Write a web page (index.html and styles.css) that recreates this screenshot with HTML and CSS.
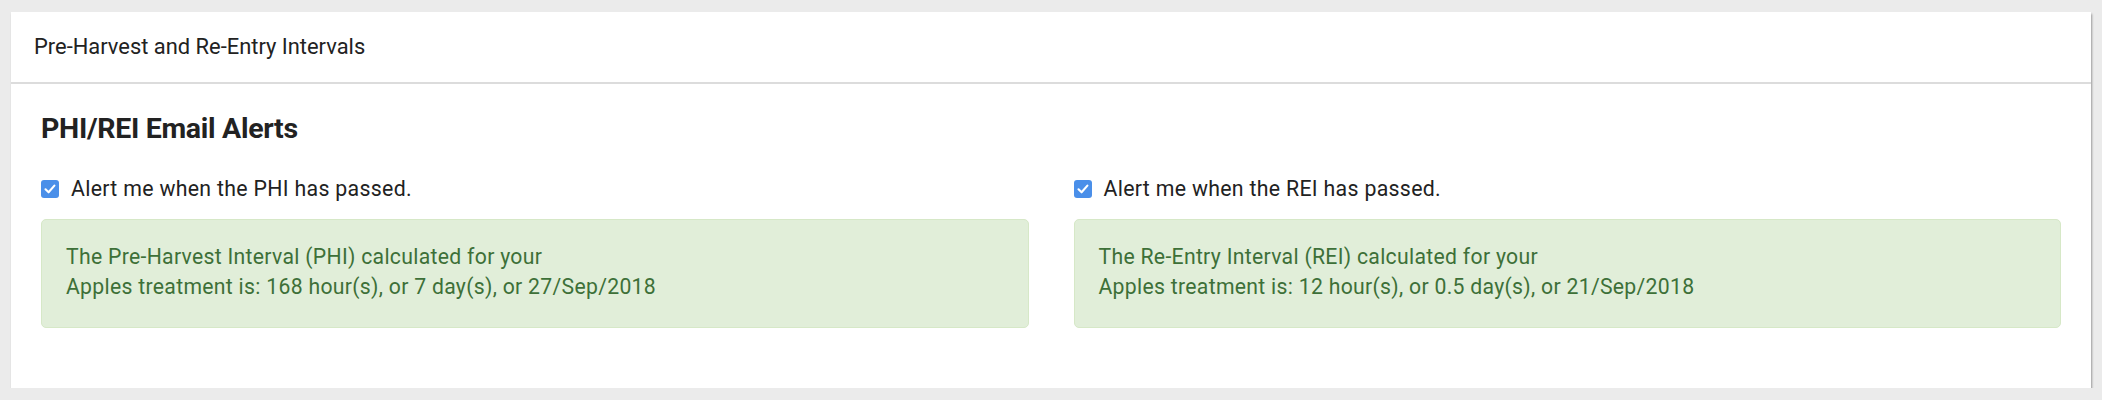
FILE: index.html
```html
<!DOCTYPE html>
<html lang="en">
<head>
<meta charset="utf-8">
<title>Pre-Harvest and Re-Entry Intervals</title>
<link rel="stylesheet" href="styles.css">
</head>
<body>
<div class="card">
  <div class="card-header">Pre-Harvest and Re-Entry Intervals</div>
  <div class="card-body">
    <h2 class="section-title">PHI/REI Email Alerts</h2>
    <div class="columns">
      <div class="col">
        <label class="check">
          <span class="box"><svg viewBox="0 0 18 18" width="18" height="18"><path d="M4.5 9.3 L7.6 12.3 L13.4 5.6" fill="none" stroke="#fff" stroke-width="2.1" stroke-linecap="round" stroke-linejoin="round"/></svg></span>
          <span class="check-text">Alert me when the PHI has passed.</span>
        </label>
        <div class="alert">
          The Pre-Harvest Interval (PHI) calculated for your<br>
          Apples treatment is: 168 hour(s), or 7 day(s), or 27/Sep/2018
        </div>
      </div>
      <div class="col">
        <label class="check">
          <span class="box"><svg viewBox="0 0 18 18" width="18" height="18"><path d="M4.5 9.3 L7.6 12.3 L13.4 5.6" fill="none" stroke="#fff" stroke-width="2.1" stroke-linecap="round" stroke-linejoin="round"/></svg></span>
          <span class="check-text">Alert me when the REI has passed.</span>
        </label>
        <div class="alert">
          The Re-Entry Interval (REI) calculated for your<br>
          Apples treatment is: 12 hour(s), or 0.5 day(s), or 21/Sep/2018
        </div>
      </div>
    </div>
  </div>
</div>
</body>
</html>
```
FILE: styles.css
```css
html, body {
  margin: 0;
  padding: 0;
}
body {
  background: #ebebeb;
  font-family: Roboto, "Liberation Sans", Arial, sans-serif;
  padding: 12px 11px 0 11px;
  color: #222;
}
.card {
  background: #fff;
  box-shadow: 1px 2px 2px rgba(0, 0, 0, 0.35);
}
.card-header {
  padding: 20px 23px;
  font-size: 21.9px;
  line-height: 30px;
  color: #222;
  border-bottom: 2px solid #dcdcdc;
}
.card-body {
  padding: 27px 30px 30px 30px;
}
.section-title {
  margin: 0 0 28px 0;
  font-size: 28.5px;
  letter-spacing: -0.3px;
  line-height: 35px;
  font-weight: 700;
  color: #222;
}
.columns {
  display: grid;
  grid-template-columns: 1fr 1fr;
  column-gap: 45px;
}
.check {
  display: flex;
  align-items: center;
  height: 30px;
  font-size: 21.3px;
  letter-spacing: 0.31px;
  line-height: 30px;
  color: #222;
}
.box {
  width: 18px;
  height: 18px;
  border-radius: 3px;
  background: #4a8fe9;
  display: inline-flex;
  margin-right: 12px;
  margin-top: -1px;
}
.box svg {
  display: block;
}
.alert {
  margin-top: 15px;
  margin-bottom: 30px;
  background: #e1eed9;
  border: 1px solid #d6e8c7;
  border-radius: 5px;
  padding: 22px 24px 25px 24px;
  font-size: 21.2px;
  letter-spacing: 0.3px;
  line-height: 30px;
  color: #3d7038;
}
```
